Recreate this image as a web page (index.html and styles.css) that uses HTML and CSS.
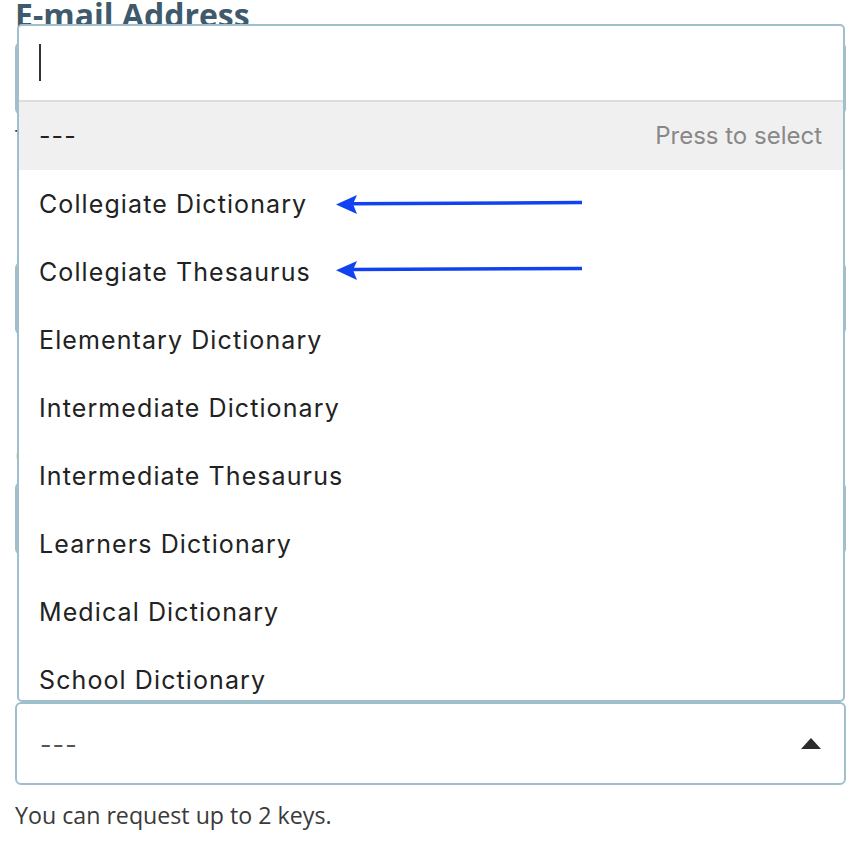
FILE: index.html
```html
<!DOCTYPE html>
<html lang="en">
<head>
<meta charset="utf-8">
<title>Request API keys</title>
<link rel="stylesheet" href="styles.css">
</head>
<body>
<form class="form">
  <div class="field">
    <label class="label">E-mail Address</label>
    <div class="input"></div>
    <p class="help">The keys will be sent to this address.</p>
  </div>
  <div class="field field-plain">
    <label class="label">Full Name</label>
    <div class="input"></div>
  </div>
  <div class="field field-plain">
    <label class="label">Company</label>
    <div class="input"></div>
  </div>
  <div class="field">
    <label class="label">Products</label>
    <div class="select">
      <span class="select-value">---</span>
      <span class="caret"></span>
    </div>
    <p class="help help-last">You can request up to 2 keys.</p>
  </div>
</form>

<div class="dropdown">
  <div class="search"><span class="cursor"></span></div>
  <ul class="options">
    <li class="option active"><span>---</span><span class="hint">Press to select</span></li>
    <li class="option">Collegiate Dictionary</li>
    <li class="option">Collegiate Thesaurus</li>
    <li class="option">Elementary Dictionary</li>
    <li class="option">Intermediate Dictionary</li>
    <li class="option">Intermediate Thesaurus</li>
    <li class="option">Learners Dictionary</li>
    <li class="option">Medical Dictionary</li>
    <li class="option">School Dictionary</li>
  </ul>
</div>

<svg class="arrows" width="850" height="858" viewBox="0 0 850 858">
  <line x1="352" y1="203.8" x2="582" y2="202.6" stroke="#1142f2" stroke-width="3.5"/>
  <polygon points="336,204.5 357,195 353,204 357,214" fill="#1142f2"/>
  <line x1="352" y1="269.6" x2="582" y2="268.4" stroke="#1142f2" stroke-width="3.5"/>
  <polygon points="336,270.3 357,261 353,270 357,280" fill="#1142f2"/>
</svg>
</body>
</html>
```

FILE: styles.css
```css
html, body {
  margin: 0;
  padding: 0;
  background: #ffffff;
}

body {
  width: 850px;
  height: 858px;
  overflow: hidden;
  position: relative;
  font-family: "Open Sans", "Liberation Sans", sans-serif;
}

.form {
  width: 831px;
  margin: -5px 0 0 15px;
  display: flex;
  flex-direction: column;
  gap: 61px;
}

.field {
  display: flex;
  flex-direction: column;
}

.field-plain {
  padding-bottom: 39px;
}

.label {
  display: block;
  font-size: 32px;
  line-height: 40px;
  font-weight: 700;
  color: #3e5a6c;
}

.input {
  margin-top: 7px;
  height: 73px;
  box-sizing: border-box;
  border: 2px solid #a0bfcd;
  border-radius: 6px;
}

.help {
  margin: 7px 0 0;
  font-size: 23px;
  line-height: 32px;
  color: #3a3a3a;
}

.select {
  margin-top: 7px;
  height: 83px;
  box-sizing: border-box;
  border: 2px solid #a0bfcd;
  border-radius: 6px;
  display: flex;
  align-items: center;
  justify-content: space-between;
  padding: 0 23px 0 23px;
}

.help-last {
  margin-top: 14px;
  font-size: 23.2px;
}

.select-value {
  font-family: Inter, "Noto Sans", sans-serif;
  font-size: 25px;
  color: #555555;
  letter-spacing: 1.1px;
  margin-top: 3px;
}

.caret {
  width: 0;
  height: 0;
  border-left: 10.5px solid transparent;
  border-right: 10.5px solid transparent;
  border-bottom: 11px solid #2b2b2b;
  margin-top: 0;
}

.dropdown {
  position: absolute;
  left: 17px;
  top: 24px;
  width: 828px;
  height: 678px;
  box-sizing: border-box;
  border: 2px solid #a0bfcd;
  border-radius: 5px;
  background: #ffffff;
  overflow: hidden;
  display: flex;
  flex-direction: column;
}

.search {
  height: 74px;
  flex: none;
  border-bottom: 2px solid #dddddd;
  display: flex;
  align-items: center;
  padding-left: 20px;
}

.cursor {
  display: block;
  width: 2px;
  height: 37px;
  background: #333333;
  margin-top: -1px;
}

.options {
  list-style: none;
  margin: 0;
  padding: 0;
  font-family: Inter, "Noto Sans", sans-serif;
  font-size: 25px;
  letter-spacing: 1.1px;
  color: #222222;
}

.option {
  height: 68px;
  line-height: 68px;
  padding: 0 21px 0 20px;
  display: flex;
  justify-content: space-between;
  white-space: nowrap;
}

.option.active {
  background: #f0f0f0;
}

.hint {
  color: #888888;
  font-size: 24px;
  letter-spacing: 0;
}

.arrows {
  position: absolute;
  left: 0;
  top: 0;
  pointer-events: none;
}
```
